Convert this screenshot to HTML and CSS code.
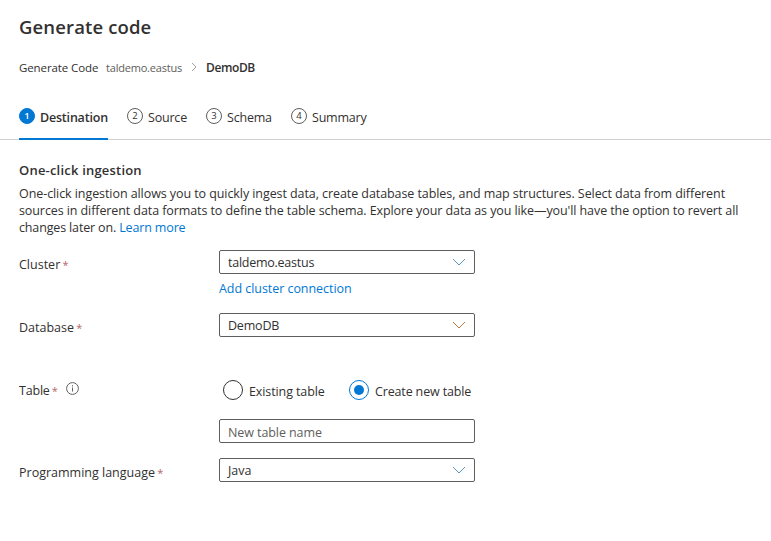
FILE: index.html
```html
<!DOCTYPE html>
<html lang="en">
<head>
<meta charset="utf-8">
<title>Generate code</title>
<link rel="stylesheet" href="styles.css">
</head>
<body>
<header class="header">
  <h1 class="title">Generate code</h1>
  <nav class="crumbs">
    <span class="crumb-root">Generate Code</span>
    <span class="crumb-cluster">taldemo.eastus</span>
    <svg class="crumb-arrow" width="6" height="10" viewBox="0 0 6 10"><path d="M1 1l4 4-4 4"/></svg>
    <span class="crumb-current">DemoDB</span>
  </nav>
</header>
<nav class="tabs">
  <div class="tab tab-active"><span class="step">1</span><span class="tab-label label-destination">Destination</span></div>
  <div class="tab"><span class="step">2</span><span class="tab-label label-source">Source</span></div>
  <div class="tab"><span class="step">3</span><span class="tab-label label-schema">Schema</span></div>
  <div class="tab"><span class="step">4</span><span class="tab-label label-summary">Summary</span></div>
</nav>
<main class="content">
  <h2 class="subtitle">One-click ingestion</h2>
  <p class="intro"><span class="line-a">One-click ingestion allows you to quickly ingest data, create database tables, and map structures. Select data from different</span><br><span class="line-b">sources in different data formats to define the table schema. Explore your data as you like—you'll have the option to revert all</span><br><span class="line-c">changes later on. <a class="link">Learn more</a></span></p>
  <form class="form">
    <div class="row row-cluster">
      <label class="label">Cluster <span class="star">*</span></label>
      <div class="field">
        <div class="box"><span class="value-cluster">taldemo.eastus</span><svg class="chevron" width="14" height="8" viewBox="0 0 14 8"><path d="M1 1l6 6 6-6"/></svg></div>
        <a class="link add-link">Add cluster connection</a>
      </div>
    </div>
    <div class="row row-database">
      <label class="label">Database <span class="star">*</span></label>
      <div class="field"><div class="box"><span class="value-database">DemoDB</span><svg class="chevron chevron-warm" width="14" height="8" viewBox="0 0 14 8"><path d="M1 1l6 6 6-6"/></svg></div></div>
    </div>
    <div class="row row-table">
      <label class="label label-table">Table <span class="star">*</span><svg class="info" width="13" height="13" viewBox="0 0 13 13"><circle cx="6.5" cy="6.5" r="5.9"/><path d="M6.5 5.5v4M6.5 3.2v1.2"/></svg></label>
      <div class="field">
        <div class="radios">
          <span class="radio"></span><span class="radio-label label-existing">Existing table</span>
          <span class="radio radio-on"></span><span class="radio-label label-create">Create new table</span>
        </div>
        <div class="box box-empty"><span class="placeholder">New table name</span></div>
      </div>
    </div>
    <div class="row">
      <label class="label">Programming language <span class="star">*</span></label>
      <div class="field"><div class="box"><span>Java</span><svg class="chevron" width="14" height="8" viewBox="0 0 14 8"><path d="M1 1l6 6 6-6"/></svg></div></div>
    </div>
  </form>
</main>
</body>
</html>
```
FILE: styles.css
```css
* { box-sizing: border-box; }
body { margin: 0; background: #fff; color: #323130; font: 12.5px/17px "Open Sans", "Noto Sans", sans-serif; white-space: nowrap; overflow: hidden; }
h1, h2, p { margin: 0; }
.header { padding: 14px 19px 0; }
.title { font-size: 18.5px; line-height: 26px; font-weight: 600; letter-spacing: .13px; }
.crumbs { display: flex; align-items: center; height: 18px; margin-top: 18px; font-size: 11.5px; }
.crumb-root { width: 87px; letter-spacing: -.1px; }
.crumb-cluster { width: 85px; font-size: 11px; letter-spacing: -.2px; color: #605e5c; }
.crumb-arrow { margin-right: 9px; fill: none; stroke: #a19f9d; }
.crumb-current { font-weight: 600; font-size: 12px; letter-spacing: -.4px; }
.tabs { display: flex; gap: 19px; height: 45px; margin-top: 19px; padding-left: 19px; border-bottom: 1px solid #d2d0ce; }
.tab { display: flex; height: 45px; padding-top: 13px; gap: 5px; }
.tab-active { border-bottom: 2px solid #0078d4; font-weight: 600; }
.step { width: 16px; height: 16px; border: 1px solid #605e5c; border-radius: 50%; text-align: center; font-size: 9.5px; line-height: 14px; }
.tab-active .step { background: #0078d4; border-color: #0078d4; color: #fff; }
.tab-label { line-height: 20px; letter-spacing: -.2px; }
.label-destination { width: 68px; }
.label-source { width: 39px; }
.label-schema { width: 45px; }
.content { padding: 21px 19px 0; }
.subtitle { font-size: 13px; line-height: 18px; font-weight: 600; letter-spacing: .2px; }
.intro { margin-top: 6px; }
.line-a { letter-spacing: -.075px; }
.line-b { letter-spacing: -.09px; }
.line-c { letter-spacing: -.15px; }
.link { color: #0078d4; }
.form { padding-top: 14px; }
.row { display: flex; }
.row-cluster { height: 63px; }
.row-database { height: 66px; }
.row-table { height: 79px; }
.label { width: 200px; padding-top: 6px; }
.label-table { padding-top: 3px; letter-spacing: -.2px; }
.star { margin-left: -1px; color: #b5666a; font-size: 11px; line-height: 1; }
.field { width: 256px; }
.box { display: flex; align-items: center; justify-content: space-between; height: 24px; padding: 0 8px; border: 1px solid #605e5c; border-radius: 2px; }
.value-cluster { letter-spacing: -.25px; }
.value-database { letter-spacing: -.2px; }
.chevron { fill: none; stroke: #5a95c5; }
.chevron-warm { stroke: #bd7840; }
.add-link { display: block; margin-top: 6px; letter-spacing: -.05px; }
.info { margin-left: 8px; fill: none; stroke: #605e5c; }
.radios { display: flex; align-items: center; height: 20px; margin: 1px 0 19px 4px; }
.radio { width: 20px; height: 20px; border: 1px solid #323130; border-radius: 50%; margin-right: 6px; flex: none; }
.radio-on { display: grid; place-items: center; border-color: #0078d4; }
.radio-on::after { content: ""; width: 10px; height: 10px; border-radius: 50%; background: #0078d4; }
.radio-label { padding-top: 2px; letter-spacing: -.1px; }
.label-existing { width: 100px; }
.label-create { letter-spacing: -.15px; }
.placeholder { padding-top: 2px; color: #605e5c; letter-spacing: -.08px; }
```
